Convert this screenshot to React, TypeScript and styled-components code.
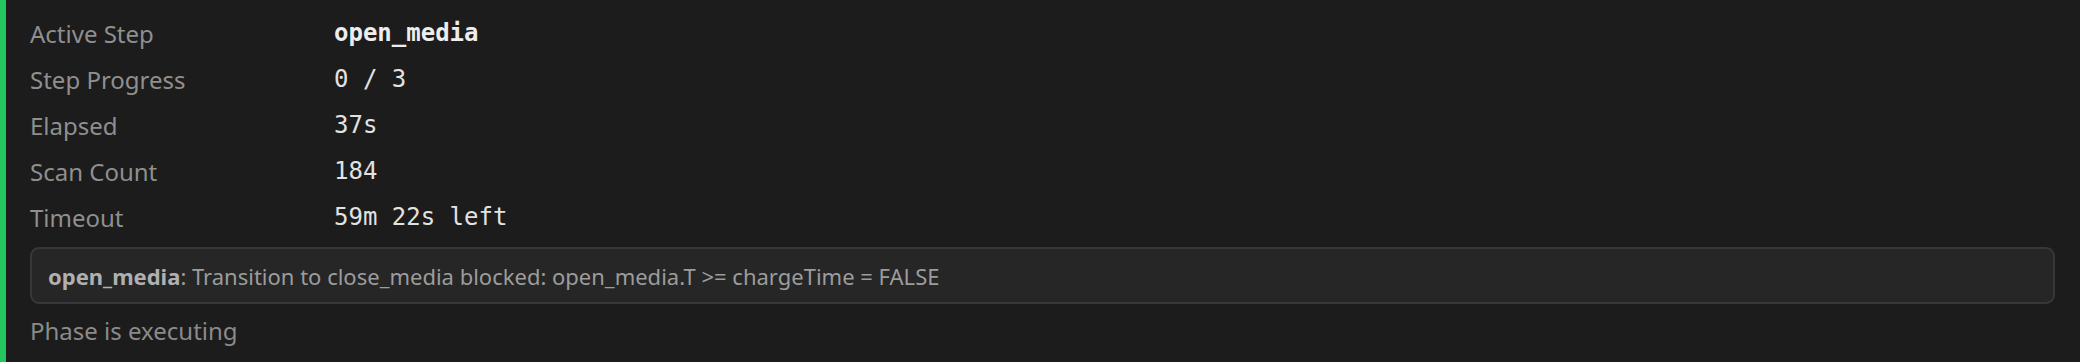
import React from "react";
import styled, { createGlobalStyle } from "styled-components";

const Global = createGlobalStyle`
  html, body { margin: 0; padding: 0; background: #1c1c1c; }
  body { font-family: "Noto Sans", sans-serif; }
`;

const Panel = styled.div`
  border-left: 6px solid #22c55e;
  background: #1c1c1c;
  padding: 10px 25px 16px 24px;
  min-height: 362px;
  box-sizing: border-box;
`;

const Grid = styled.div`
  display: grid;
  grid-template-columns: 304px 1fr;
  grid-auto-rows: 46px;
  align-items: center;
`;

const Label = styled.div`
  font-family: "Noto Sans", sans-serif;
  font-size: 24px;
  color: #8f8f8f;
`;

const Value = styled.div<{ $bold?: boolean }>`
  font-family: "DejaVu Sans Mono", monospace;
  font-size: 24px;
  color: ${(p) => (p.$bold ? "#ededed" : "#e2e2e2")};
  font-weight: ${(p) => (p.$bold ? 700 : 400)};
`;

const Notice = styled.div`
  margin-top: 7px;
  height: 57px;
  box-sizing: border-box;
  display: flex;
  align-items: center;
  padding: 0 16px;
  background: #262626;
  border: 2px solid #383838;
  border-radius: 9px;
  font-size: 22px;
  color: #9c9c9c;
`;

const Strong = styled.span`
  font-weight: 700;
  color: #b0b0b0;
`;

const Status = styled.div`
  margin-top: 10px;
  font-size: 24px;
  line-height: 34px;
  color: #8a8a8a;
`;

const rows: { label: string; value: string; bold?: boolean }[] = [
  { label: "Active Step", value: "open_media", bold: true },
  { label: "Step Progress", value: "0 / 3" },
  { label: "Elapsed", value: "37s" },
  { label: "Scan Count", value: "184" },
  { label: "Timeout", value: "59m 22s left" },
];

export default function App() {
  return (
    <>
      <Global />
      <Panel>
        <Grid>
          {rows.map((r) => (
            <React.Fragment key={r.label}>
              <Label>{r.label}</Label>
              <Value $bold={r.bold}>{r.value}</Value>
            </React.Fragment>
          ))}
        </Grid>
        <Notice>
          <span>
            <Strong>open_media</Strong>: Transition to close_media blocked: open_media.T &gt;= chargeTime = FALSE
          </span>
        </Notice>
        <Status>Phase is executing</Status>
      </Panel>
    </>
  );
}
